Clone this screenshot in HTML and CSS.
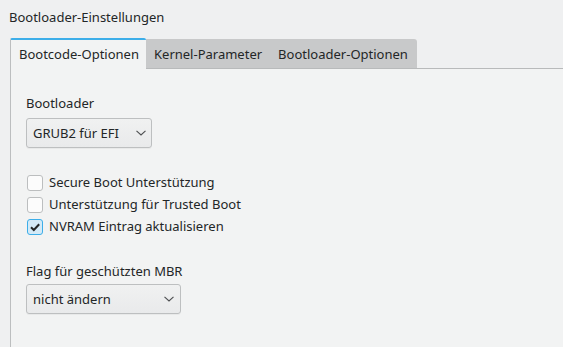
FILE: index.html
```html
<!DOCTYPE html>
<html>
<head>
<meta charset="utf-8">
<link rel="stylesheet" href="styles.css">
</head>
<body>
<div class="title">Bootloader-Einstellungen</div>
<div class="tabwidget">
  <div class="tabbar">
    <div class="tab active">Bootcode-Optionen</div>
    <div class="tabgroup">
      <div class="tab">Kernel-Parameter</div>
      <div class="tab">Bootloader-Optionen</div>
    </div>
    <div class="tabfill"></div>
  </div>
  <div class="panel">
    <div class="label">Bootloader</div>
    <div class="combo combo1"><span>GRUB2 für EFI</span>
      <svg width="10" height="6" viewBox="0 0 10 6"><path d="M0.5 0.8 L5 5 L9.5 0.8" fill="none" stroke="#4d4f51" stroke-width="1.1"/></svg>
    </div>
    <div class="checks">
      <div class="check"><span class="box"></span>Secure Boot Unterstützung</div>
      <div class="check"><span class="box"></span>Unterstützung für Trusted Boot</div>
      <div class="check"><span class="box on"><svg width="14" height="14" viewBox="0 0 14 14"><path d="M3 7.2 L5.8 10 L11.2 4.2" fill="none" stroke="#232627" stroke-width="2"/></svg></span>NVRAM Eintrag aktualisieren</div>
    </div>
    <div class="label label2">Flag für geschützten MBR</div>
    <div class="combo combo2"><span>nicht ändern</span>
      <svg width="10" height="6" viewBox="0 0 10 6"><path d="M0.5 0.8 L5 5 L9.5 0.8" fill="none" stroke="#4d4f51" stroke-width="1.1"/></svg>
    </div>
  </div>
</div>
</body>
</html>
```
FILE: styles.css
```css
html, body {
  margin: 0;
  padding: 0;
  height: 100%;
  overflow: hidden;
}
body {
  background: #eff0f1;
  font-family: "Noto Sans", sans-serif;
  font-size: 13px;
  color: #232627;
}
.title {
  padding: 8px 0 0 9px;
  height: 30px;
  box-sizing: border-box;
  line-height: 18px;
}
.tabwidget {
  margin-left: 10px;
  margin-top: 8px;
}
.tabbar {
  display: flex;
  height: 31px;
  align-items: flex-end;
}
.tab {
  box-sizing: border-box;
  height: 30px;
  line-height: 28px;
  padding: 0 9px;
  white-space: nowrap;
}
.tab.active {
  height: 31px;
  padding: 0 8px 0 8px;
  width: 136px;
  background: #f2f3f3;
  border-top: 2px solid #3daee9;
  border-left: 1px solid #bcbebf;
  line-height: 28px;
  border-radius: 2px 2px 0 0;
}
.tabgroup {
  display: flex;
  height: 30px;
  box-sizing: border-box;
  background: #c8c9ca;
  border-bottom: 1px solid #b8babb;
  border-radius: 0 3px 0 0;
  padding-right: 1px;
}
.tabgroup .tab {
  height: 29px;
  line-height: 30px;
  padding: 0 8px 0 8px;
}
.tabfill {
  flex: 1;
  height: 1px;
  background: #b8babb;
}
.panel {
  background: #f2f3f3;
  border-left: 1px solid #bcbebf;
  height: 278px;
  padding: 20px 0 0 15px;
  box-sizing: border-box;
}
.label {
  line-height: 18px;
  margin-top: 5px;
}
.combo {
  box-sizing: border-box;
  margin-top: 6px;
  height: 30px;
  border: 1px solid #bdbfc0;
  border-radius: 3px;
  background: linear-gradient(#f0f1f1, #e9eaeb);
  display: flex;
  align-items: center;
  justify-content: space-between;
  padding: 0 5px 0 6px;
  box-shadow: 0 1px 0 rgba(0,0,0,0.04);
}
.combo1 { width: 126px; }
.combo2 { width: 155px; padding-right: 6px; margin-top: 4px; }
.checks {
  margin-top: 26px;
  display: flex;
  flex-direction: column;
  gap: 5px;
}
.check {
  display: flex;
  align-items: center;
  height: 17px;
  line-height: 17px;
}
.box {
  box-sizing: border-box;
  width: 16px;
  height: 16px;
  border: 1px solid #bcbebf;
  border-radius: 3px;
  background: #fcfcfc;
  margin: 0 6px 0 1px;
  display: flex;
  align-items: center;
  justify-content: center;
}
.box.on {
  background: #d4eaf7;
  border-color: #3daee9;
}
.label2 {
  margin-top: 27px;
}
```
